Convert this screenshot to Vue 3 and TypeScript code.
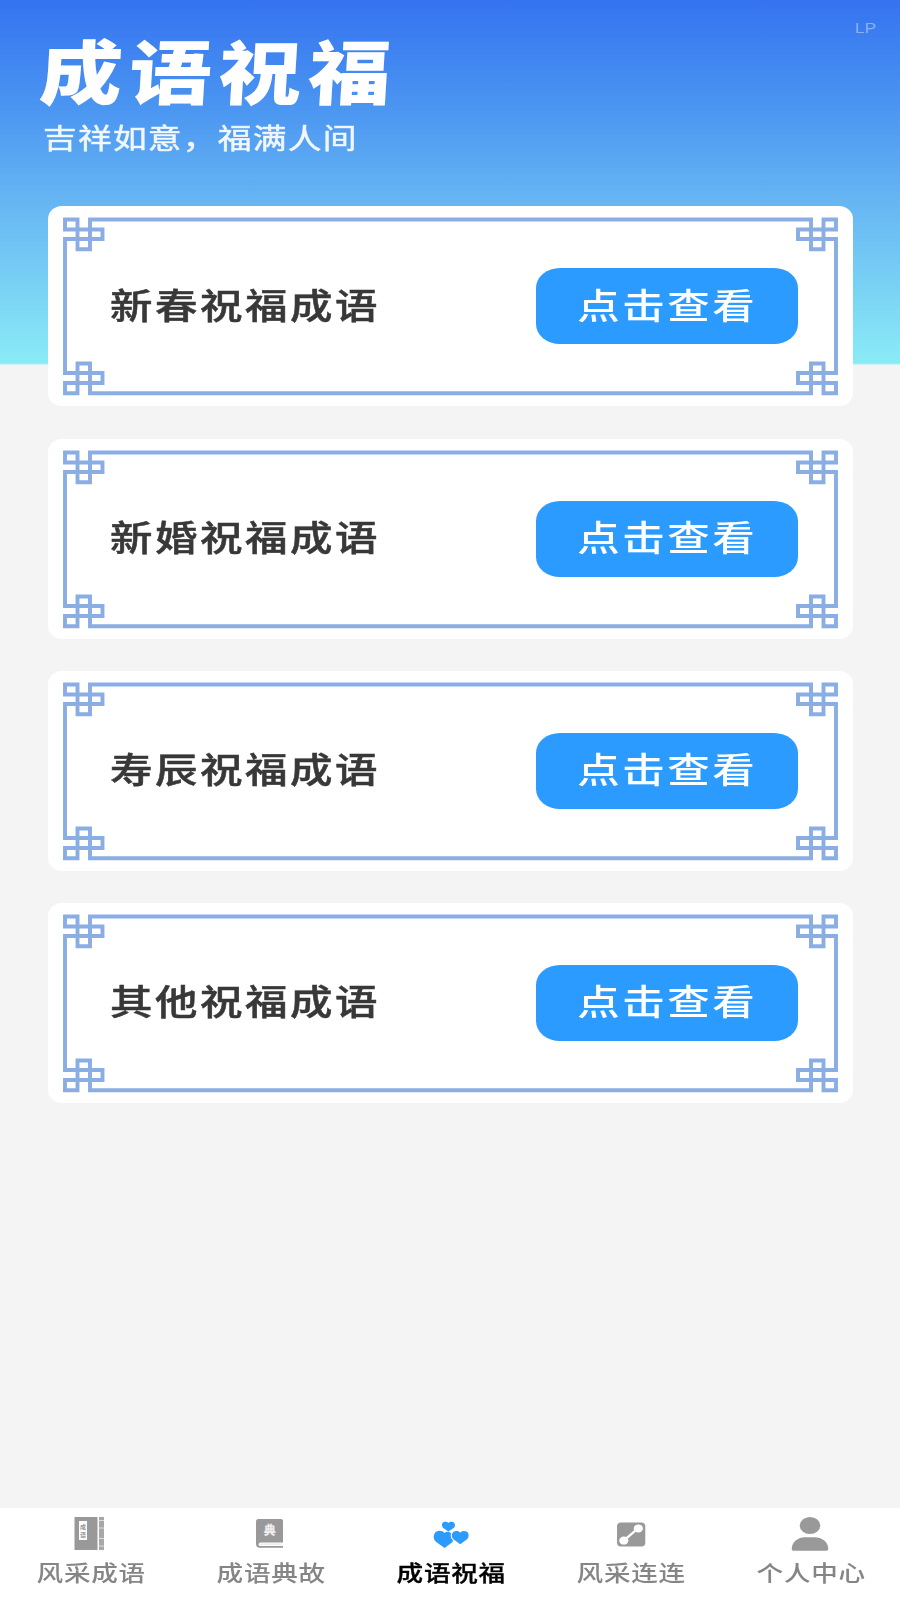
<script setup lang="ts">
interface Tab { label: string; icon: 'album' | 'book' | 'hearts' | 'link' | 'user' }

const cards: string[] = ['新春祝福成语', '新婚祝福成语', '寿辰祝福成语', '其他祝福成语']
const tabs: Tab[] = [
  { label: '风采成语', icon: 'album' },
  { label: '成语典故', icon: 'book' },
  { label: '成语祝福', icon: 'hearts' },
  { label: '风采连连', icon: 'link' },
  { label: '个人中心', icon: 'user' },
]
const active = 2

const frame = [
  'M42 13.5V43.3H29.5V13.5H17V23.5H54.5V33H17V167H54.5V177H17V187.3H29.5V157.5H42V187.3',
  'H763V157.5H775.5V187.3H788V177H750V167H788V33H750V23.5H788V13.5H775.5V43.3H763V13.5Z',
].join('')
</script>

<template>
  <div class="page">
    <header class="hero">
      <span class="mark">LP</span>
      <h1 class="title">成语祝福</h1>
      <p class="subtitle">吉祥如意，福满人间</p>
    </header>

    <main class="list">
      <section v-for="name in cards" :key="name" class="card">
        <svg class="frame" viewBox="0 0 805 200" preserveAspectRatio="none">
          <path :d="frame" />
        </svg>
        <h2 class="name">{{ name }}</h2>
        <button class="view" type="button"><span>点击查看</span></button>
      </section>
    </main>

    <nav class="tabs">
      <a v-for="(tab, i) in tabs" :key="tab.label" class="tab" :class="{ active: i === active }">
        <svg v-if="tab.icon === 'album'" class="icon" viewBox="0 0 44 40">
          <path d="M6.5 5H29.5V38H6.5Z" />
          <path d="M31 5H36V38H31Z" opacity=".85" />
          <path d="M30.5 8.5H36M30.5 16H36M30.5 26.5H36M30.5 34H36" stroke="#ddd" stroke-width="1.1" />
          <path d="M11 9H19V28H11Z" fill="#fff" />
          <text x="12" y="17.2" font-size="6" font-weight="700">成</text>
          <text x="12" y="25.2" font-size="6" font-weight="700">语</text>
        </svg>
        <svg v-else-if="tab.icon === 'book'" class="icon" viewBox="0 0 44 40">
          <path d="M10.5 7H33Q35 7 35 9V30.5H12.5Q10.5 30.5 10.5 32.5Q10.5 34 12.5 34H35V35.7H12Q8 35.7 8 32V9.5Q8 7 10.5 7Z" />
          <path d="M11.5 31.3H34.5V33.2H11.5Z" fill="#eee" />
          <text x="15.7" y="23.3" font-size="12" font-weight="900" fill="#eee">典</text>
        </svg>
        <svg v-else-if="tab.icon === 'hearts'" class="icon" viewBox="0 0 44 40">
          <path d="M20.4 19.5L15.2 16C13.2 14.2 13.6 11 15.8 10C17.6 9.3 19.4 9.8 20.4 11C21.5 9.8 23.3 9.3 25 10C27.2 11 27.7 14.2 25.7 16Z" />
          <path d="M16.5 35.9L7.6 29.4C4.8 26.5 5.2 21.2 8.6 19.4C11.6 18 14.8 18.8 16.5 21C18 19.6 19.8 19.6 21.6 20.3C23.6 21.2 25.5 23.4 25.6 26Q25.7 28.4 24.3 30.2Z" />
          <path class="front" d="M32.2 32.3L25.4 27.2C23.1 25 23.5 20.8 26 19.5C28.4 18.3 31 19 32.2 20.7C33.5 19 36.2 18.3 38.5 19.5C41.1 20.8 41.4 25 39.1 27.2Z" />
        </svg>
        <svg v-else-if="tab.icon === 'link'" class="icon" viewBox="0 0 44 40">
          <rect x="9" y="10.5" width="28.3" height="24" rx="4" />
          <path d="M16 28.3L30 16.3" stroke="#fff" stroke-width="2.4" />
          <ellipse cx="15.8" cy="28.6" rx="4.6" ry="4" fill="#fff" />
          <ellipse cx="30.3" cy="16.4" rx="4.6" ry="4" fill="#fff" />
        </svg>
        <svg v-else class="icon" viewBox="0 0 44 40">
          <ellipse cx="22" cy="13.5" rx="10.3" ry="8.6" />
          <path d="M3.7 37C3.7 30 10 25.2 17 25.2H26.5C34 25.2 40.3 30 40.3 37Q40.3 38.7 38.5 38.7H5.5Q3.7 38.7 3.7 37Z" />
        </svg>
        <span class="label">{{ tab.label }}</span>
      </a>
    </nav>
  </div>
</template>

<style>
body { margin: 0; background: #f4f4f4; }
</style>

<style scoped>
.page {
  width: 900px;
  height: 1600px;
  display: flex;
  flex-direction: column;
  box-sizing: border-box;
  overflow: hidden;
  background: linear-gradient(#3573f0 0, #4993f1 100px, #66b5f3 200px, #8aebf6 363px, #f4f4f4 365.5px);
  font-family: "Noto Sans CJK SC", sans-serif;
}
.hero { position: relative; height: 206.4px; flex: none; color: #fff; }
.mark {
  position: absolute;
  top: 18px;
  right: 24px;
  font: 15px/20px "Liberation Sans", sans-serif;
  transform: scaleX(1.16);
  transform-origin: right;
  color: rgba(255, 255, 255, .4);
}
.title {
  margin: 0;
  padding: 32px 0 0 40px;
  width: max-content;
  font-size: 70px;
  line-height: 73px;
  font-weight: 900;
  letter-spacing: 5.8px;
  transform: scaleX(1.18) skewX(-3deg);
  transform-origin: 40px 72px;
}
.subtitle {
  margin: 11.5px 0 0 43px;
  width: max-content;
  font-size: 28.5px;
  line-height: 40px;
  letter-spacing: 1px;
  color: rgba(255, 255, 255, .9);
  -webkit-text-stroke: .6px rgba(255, 255, 255, .7);
  transform: scaleX(1.185);
  transform-origin: left;
}
.list { flex: 1; padding: 0 47px 0 48px; display: flex; flex-direction: column; gap: 32.2px; }
.card {
  position: relative;
  height: 200px;
  box-sizing: border-box;
  padding: 0 55px 0 62px;
  border-radius: 14px / 13px;
  background: #fff;
  display: flex;
  align-items: center;
  justify-content: space-between;
}
.frame { position: absolute; inset: 0; width: 100%; height: 100%; filter: blur(.6px); }
.frame path { fill: none; stroke: #8aade3; stroke-width: 3.9; }
.name {
  margin: -5px 0 0;
  font-size: 35px;
  line-height: 50px;
  font-weight: 500;
  letter-spacing: 2.1px;
  color: #383838;
  -webkit-text-stroke: .5px #383838;
  transform: scaleX(1.213);
  transform-origin: left;
}
.view {
  width: 262.5px;
  height: 76px;
  padding: 0 0 5px;
  border: 0;
  border-radius: 24px / 20px;
  background: #2b9bff;
  color: #fff;
  font: 500 35px/50px "Noto Sans CJK SC", sans-serif;
}
.view span { display: inline-block; letter-spacing: 2.1px; transform: scaleX(1.213); }
.tabs { height: 92px; flex: none; background: #fff; display: grid; grid-template-columns: repeat(5, 1fr); }
.tab { display: flex; flex-direction: column; align-items: center; color: #858585; }
.icon { width: 44px; height: 40px; margin-top: 4px; fill: #999; overflow: visible; }
.label {
  margin: 5px 0 0 2px;
  font-size: 21.5px;
  line-height: 30px;
  font-weight: 500;
  letter-spacing: .6px;
  white-space: nowrap;
  transform: scaleX(1.235);
}
.active { color: #000; }
.active .icon { fill: #2b9bff; }
.front { stroke: #fff; stroke-width: 2.4; paint-order: stroke; }
.active .label { -webkit-text-stroke: .3px currentColor; }
</style>
